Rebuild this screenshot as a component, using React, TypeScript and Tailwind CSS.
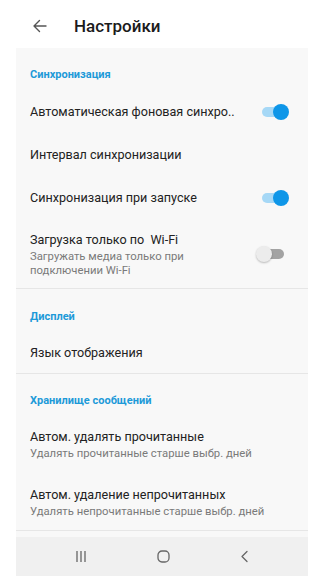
import React from "react";

const font = { fontFamily: "Roboto, 'Noto Sans', sans-serif" };

function Toggle({ on }: { on: boolean }) {
  return (
    <div className="relative w-[34px] h-[16px] flex items-center shrink-0">
      <div
        className={
          "absolute left-[6px] w-[22px] h-[10px] rounded-full " +
          (on ? "bg-[#a6d8f6]" : "bg-[#a3a3a3]")
        }
      />
      <div
        className={
          "absolute top-0 w-[16px] h-[16px] rounded-full " +
          (on
            ? "left-[17px] bg-[#0e96e8]"
            : "left-0 bg-[#ececec] shadow-[0_1px_2px_rgba(0,0,0,0.25)]")
        }
      />
    </div>
  );
}

function SectionHeader({ text, pt }: { text: string; pt: string }) {
  return (
    <div className={"px-[14px] pb-[8px] " + pt}>
      <div className="text-[11px] leading-[14px] font-bold text-[#1d9ad8]">
        {text}
      </div>
    </div>
  );
}

function Row({ title, toggle }: { title: string; toggle?: boolean }) {
  return (
    <div className="h-[43px] flex items-center justify-between pl-[14px] pr-[18px]">
      <div className="text-[12.6px] leading-[20px] text-[#222222]">{title}</div>
      {toggle !== undefined && <Toggle on={toggle} />}
    </div>
  );
}

export default function App() {
  return (
    <div className="w-[324px] h-[576px] bg-white flex flex-col overflow-hidden" style={font}>
      <div className="h-[48px] flex items-center shrink-0 pt-[4px]">
        <svg
          width="16"
          height="16"
          viewBox="0 0 16 16"
          className="ml-[32px]"
          fill="none"
          stroke="#555555"
          strokeWidth="1.4"
          strokeLinecap="round"
          strokeLinejoin="round"
        >
          <path d="M14 8H2M7.5 2.5L2 8l5.5 5.5" />
        </svg>
        <div className="ml-[26px] text-[17px] font-medium text-[#1b1b1b] leading-[22px]">
          Настройки
        </div>
      </div>
      <div className="mx-[16px] flex-1 flex flex-col bg-[#f8f8f8]">
        <SectionHeader text="Синхронизация" pt="pt-[20px]" />
        <Row title="Автоматическая фоновая синхро.." toggle={true} />
        <Row title="Интервал синхронизации" />
        <Row title="Синхронизация при запуске" toggle={true} />
        <div className="flex items-center justify-between pl-[14px] pr-[18px] pt-[11px] pb-[10px]">
          <div>
            <div className="text-[12.6px] leading-[20px] text-[#222222]">
              Загрузка только по&nbsp; Wi-Fi
            </div>
            <div className="text-[11.3px] leading-[14px] text-[#7a7a7a]">
              Загружать медиа только при
              <br />
              подключении Wi-Fi
            </div>
          </div>
          <Toggle on={false} />
        </div>
        <div className="h-px bg-[#e6e6e6]" />
        <SectionHeader text="Дисплей" pt="pt-[21px]" />
        <div className="h-[41px] flex items-center pl-[14px]">
          <div className="text-[12.6px] leading-[20px] text-[#222222]">Язык отображения</div>
        </div>
        <div className="h-px bg-[#e6e6e6]" />
        <SectionHeader text="Хранилище сообщений" pt="pt-[20px]" />
        <div className="pl-[14px] pt-[11px] pb-[13px]">
          <div className="text-[12.6px] leading-[20px] text-[#222222]">
            Автом. удалять прочитанные
          </div>
          <div className="text-[11.3px] leading-[14px] text-[#7a7a7a]">
            Удалять прочитанные старше выбр. дней
          </div>
        </div>
        <div className="pl-[14px] pt-[11px] pb-[11px]">
          <div className="text-[12.6px] leading-[20px] text-[#222222]">
            Автом. удаление непрочитанных
          </div>
          <div className="text-[11.3px] leading-[14px] text-[#7a7a7a]">
            Удалять непрочитанные старше выбр. дней
          </div>
        </div>
        <div className="h-px bg-[#e6e6e6]" />
        <div className="flex-1" />
        <div className="h-[39px] bg-[#f0f0f0] flex items-center justify-around px-[24px] shrink-0">
          <svg width="12" height="13" viewBox="0 0 12 13" fill="none" stroke="#666666" strokeWidth="1.3">
            <path d="M2 1v11M6 1v11M10 1v11" />
          </svg>
          <svg width="13" height="13" viewBox="0 0 13 13" fill="none" stroke="#666666" strokeWidth="1.3">
            <rect x="1" y="1" width="11" height="11" rx="4" />
          </svg>
          <svg width="9" height="13" viewBox="0 0 9 13" fill="none" stroke="#666666" strokeWidth="1.3" strokeLinecap="round" strokeLinejoin="round">
            <path d="M7 1.5L2 6.5l5 5" />
          </svg>
        </div>
      </div>
    </div>
  );
}
